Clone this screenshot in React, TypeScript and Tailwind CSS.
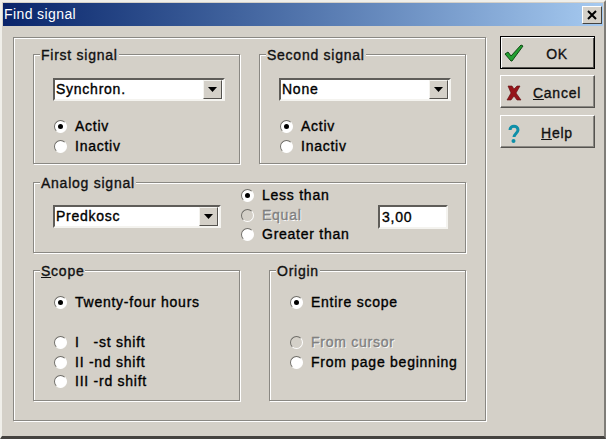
import React from "react";

const FONT = "font-['Liberation_Sans',Arial,sans-serif]";

function Radio({ label, checked, disabled }: { label: React.ReactNode; checked?: boolean; disabled?: boolean }) {
  return (
    <div className="flex items-center h-[19px] gap-[8px]">
      <span className={`relative flex items-center justify-center w-[13px] h-[13px] shrink-0 rounded-full border border-t-[#6f6d68] border-l-[#6f6d68] border-b-white border-r-white ${disabled ? "bg-[#d4d0c8]" : "bg-white"}`}>
        {checked && <span className="w-[5px] h-[5px] rounded-full bg-black" />}
      </span>
      <span className={`whitespace-pre ${disabled ? "text-[#808080] [text-shadow:1px_1px_0_#fff]" : "text-black"}`}>{label}</span>
    </div>
  );
}

function Arrow() {
  return (
    <span className="flex items-center justify-center w-[19px] h-[19px] bg-[#d4d0c8] border border-t-[#f4f3ef] border-l-[#f4f3ef] border-b-[#55534f] border-r-[#55534f]">
      <svg width="9" height="5" viewBox="0 0 9 5"><path d="M0 0h9L4.5 5z" fill="#000" /></svg>
    </span>
  );
}

function Combo({ text, w }: { text: string; w: string }) {
  return (
    <div className={`${w} h-[23px] flex items-center justify-between pl-[1px] pr-[1px] bg-white border-2 border-t-[#5f5d59] border-l-[#5f5d59] border-b-[#f4f3ef] border-r-[#f4f3ef]`}>
      <span className="text-black">{text}</span>
      <Arrow />
    </div>
  );
}

function Group({ title, className, children }: { title: React.ReactNode; className: string; children: React.ReactNode }) {
  return (
    <div className={`relative border border-[#8a8883] shadow-[1px_1px_0_#fff,inset_1px_1px_0_#fff] ${className}`}>
      <span className="absolute left-[6px] top-[-8px] bg-[#d4d0c8] px-[1px] leading-[16px] text-[#111]">{title}</span>
      {children}
    </div>
  );
}

function Btn({ icon, label, isDefault, className, iconTop }: { icon: React.ReactNode; label: React.ReactNode; isDefault?: boolean; className?: string; iconTop: string }) {
  return (
    <div className={`relative w-[95px] h-[33px] flex items-center justify-center pl-[19px] pt-[3px] bg-[#d4d0c8] ${className ?? ""} ${isDefault ? "border border-black shadow-[inset_1px_1px_0_#fff,inset_-1px_-1px_0_#55534f]" : "border border-t-white border-l-white border-b-[#55534f] border-r-[#55534f] shadow-[inset_-1px_-1px_0_#8a8883]"}`}>
      <span className={`absolute left-[3px] ${iconTop}`}>{icon}</span>
      <span className="text-[#111]">{label}</span>
    </div>
  );
}

export default function App() {
  return (
    <div className={`${FONT} w-[606px] h-[439px] overflow-hidden bg-[#d4d0c8] border-t-2 border-l-2 border-t-[#f0efea] border-l-[#f0efea] border-r-2 border-r-[#7f7d78] border-b-[3px] border-b-[#44423f] text-[14px] font-normal tracking-[0.75px] [-webkit-text-stroke:0.35px_currentColor] flex flex-col`}>
      <div className="ml-px mr-px mt-px h-[23px] shrink-0 flex items-center justify-between bg-gradient-to-r from-[#0a246a] to-[#a6caf0] pl-[1px] pr-[1px]">
        <span className="text-white text-[14px] tracking-[0.4px] [-webkit-text-stroke:0px]">Find signal</span>
        <span className="flex items-center justify-center w-[20px] h-[18px] bg-[#d4d0c8] border border-t-white border-l-white border-b-[#44423f] border-r-[#44423f]">
          <svg width="10" height="10" viewBox="0 0 10 10"><path d="M1 1l8 8M9 1l-8 8" stroke="#000" strokeWidth="2" /></svg>
        </span>
      </div>
      <div className="flex pl-[11px] pt-[11px] gap-[14px]">
        <div className="w-[473px] h-[384px] border border-[#8a8883] shadow-[1px_1px_0_#fff,inset_1px_1px_0_#fff] pl-[19px] pt-[16px] flex flex-col">
          <div className="flex gap-[19px]">
            <Group title="First signal" className="w-[207px] h-[110px] pl-[19px] pt-[23px]">
              <Combo text="Synchron." w="w-[172px]" />
              <div className="mt-[16px] pl-px flex flex-col gap-px">
                <Radio label="Activ" checked />
                <Radio label="Inactiv" />
              </div>
            </Group>
            <Group title="Second signal" className="w-[207px] h-[110px] pl-[19px] pt-[23px]">
              <Combo text="None" w="w-[172px]" />
              <div className="mt-[16px] pl-px flex flex-col gap-px">
                <Radio label="Activ" checked />
                <Radio label="Inactiv" />
              </div>
            </Group>
          </div>
          <Group title="Analog signal" className="mt-[18px] w-[433px] h-[71px] flex">
            <div className="pl-[19px] pt-[22px] w-[207px]">
              <Combo text="Predkosc" w="w-[168px]" />
            </div>
            <div className="pt-[3px] flex flex-col gap-[0.5px] w-[137px]">
              <Radio label="Less than" checked />
              <Radio label="Equal" disabled />
              <Radio label="Greater than" />
            </div>
            <div className="pt-[22px]">
              <div className="w-[70px] h-[24px] flex items-center pl-[2px] bg-white border-2 border-t-[#5f5d59] border-l-[#5f5d59] border-b-[#f4f3ef] border-r-[#f4f3ef] text-black">3,00</div>
            </div>
          </Group>
          <div className="mt-[17px] flex gap-[29px]">
            <Group title={<><span className="underline">S</span>cope</>} className="w-[207px] h-[131px] pl-[20px] pt-[22px]">
              <Radio label="Twenty-four hours" checked />
              <div className="mt-[21px] flex flex-col gap-[0.5px]">
                <Radio label="I   -st shift" />
                <Radio label="II -nd shift" />
                <Radio label="III -rd shift" />
              </div>
            </Group>
            <Group title="Origin" className="w-[197px] h-[131px] pl-[20px] pt-[22px]">
              <Radio label="Entire scope" checked />
              <div className="mt-[21px] flex flex-col gap-[0.5px]">
                <Radio label="From cursor" disabled />
                <Radio label="From page beginning" />
              </div>
            </Group>
          </div>
        </div>
        <div className="flex flex-col -mt-px">
          <Btn
            isDefault
            iconTop="top-[6px]"
            label="OK"
            icon={
              <svg width="20" height="20" viewBox="0 0 20 20">
                <path d="M1 11l3-2 3 4 10-11 2 1-11 15H7z" fill="#22a032" stroke="#0f4a14" strokeWidth="1" strokeLinejoin="round" />
              </svg>
            }
          />
          <Btn
            className="mt-[6px]"
            iconTop="top-[7px]"
            label={<><span className="underline">C</span>ancel</>}
            icon={
              <svg width="20" height="20" viewBox="0 0 20 20">
                <path d="M4 3h4l2 3 3-3h3l-4 7 5 7h-4l-3-4-3 4H3l4-7z" fill="#96151a" stroke="#5c0a0d" strokeWidth="0.6" strokeLinejoin="round" />
              </svg>
            }
          />
          <Btn
            className="mt-[7px]"
            iconTop="top-[8px]"
            label={<><span className="underline">H</span>elp</>}
            icon={
              <svg width="20" height="20" viewBox="0 0 20 20">
                <path d="M6 6c0-5 8-5 8 0 0 3-4 4-4 7" fill="none" stroke="#0e8fa8" strokeWidth="3" />
                <circle cx="9.5" cy="17" r="2" fill="#0e8fa8" />
              </svg>
            }
          />
        </div>
      </div>
    </div>
  );
}
